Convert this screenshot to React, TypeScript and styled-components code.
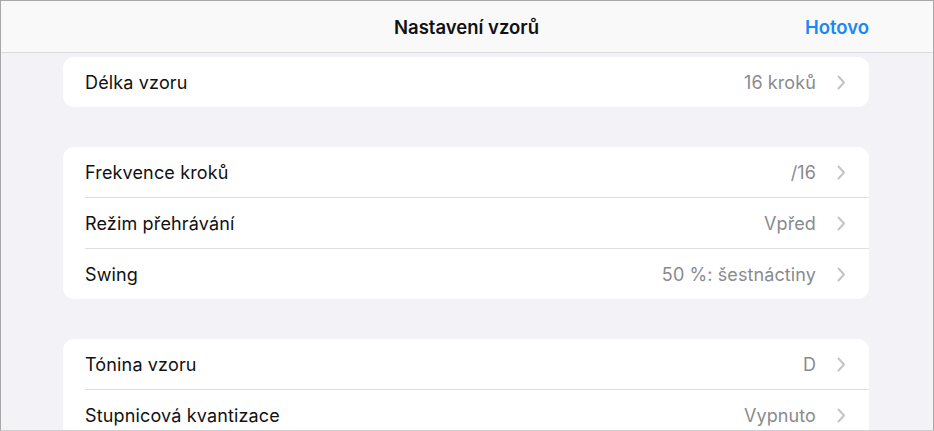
import React from "react";
import styled, { createGlobalStyle } from "styled-components";

const Global = createGlobalStyle`
  html, body { margin: 0; padding: 0; background: #ffffff; }
  body { font-family: Inter, "Noto Sans", "Liberation Sans", sans-serif; -webkit-font-smoothing: antialiased; }
  * { box-sizing: border-box; }
`;

const Frame = styled.div`
  width: 934px;
  height: 431px;
  border: 1px solid #a8a8a8;
  border-bottom-color: #cfcfcf;
  overflow: hidden;
  display: flex;
  flex-direction: column;
  background: #f2f2f7;
`;

const Header = styled.header`
  flex: 0 0 52px;
  display: grid;
  grid-template-columns: 1fr auto 1fr;
  align-items: center;
  padding: 0 64px 0 63px;
  background: #f9f9f9;
  border-bottom: 1px solid #dcdcdf;
`;

const Title = styled.h1`
  grid-column: 2;
  margin: 0;
  font-size: 18.5px;
  font-weight: 600;
  color: #111111;
  letter-spacing: 0;
`;

const DoneButton = styled.button`
  grid-column: 3;
  justify-self: end;
  border: 0;
  background: none;
  padding: 0;
  font: inherit;
  font-size: 18.5px;
  font-weight: 600;
  color: #1a88f5;
  cursor: pointer;
`;

const Content = styled.main`
  flex: 1;
  display: flex;
  flex-direction: column;
  gap: 40px;
  padding: 4px 64px 0 62px;
`;

const Group = styled.section`
  background: #ffffff;
  border-radius: 11px;
  display: flex;
  flex-direction: column;
  flex-shrink: 0;
`;

const Row = styled.div<{ $divider?: boolean }>`
  height: ${(p) => (p.$divider ? 51 : 50)}px;
  margin-left: 22px;
  padding-right: 23px;
  display: flex;
  align-items: center;
  gap: 21px;
  border-top: ${(p) => (p.$divider ? "1px solid #dededf" : "none")};
`;

const Label = styled.span`
  flex: 1;
  font-size: 18px;
  color: #111111;
  letter-spacing: 0.15px;
`;

const Value = styled.span`
  font-size: 18px;
  color: #8a8a8e;
  letter-spacing: 0.1px;
`;

const Chevron = () => (
  <svg width="9" height="15" viewBox="0 0 9 15" fill="none">
    <path d="M1.5 1.5 L7 7.5 L1.5 13.5" stroke="#c4c4c7" strokeWidth="2" strokeLinecap="round" strokeLinejoin="round" />
  </svg>
);

type Item = { label: string; value: string };

const groups: Item[][] = [
  [{ label: "Délka vzoru", value: "16 kroků" }],
  [
    { label: "Frekvence kroků", value: "/16" },
    { label: "Režim přehrávání", value: "Vpřed" },
    { label: "Swing", value: "50 %: šestnáctiny" },
  ],
  [
    { label: "Tónina vzoru", value: "D" },
    { label: "Stupnicová kvantizace", value: "Vypnuto" },
  ],
];

export default function App() {
  return (
    <>
      <Global />
      <Frame>
        <Header>
          <Title>Nastavení vzorů</Title>
          <DoneButton>Hotovo</DoneButton>
        </Header>
        <Content>
          {groups.map((g, gi) => (
            <Group key={gi}>
              {g.map((it, i) => (
                <Row key={it.label} $divider={i > 0}>
                  <Label>{it.label}</Label>
                  <Value>{it.value}</Value>
                  <Chevron />
                </Row>
              ))}
            </Group>
          ))}
        </Content>
      </Frame>
    </>
  );
}
